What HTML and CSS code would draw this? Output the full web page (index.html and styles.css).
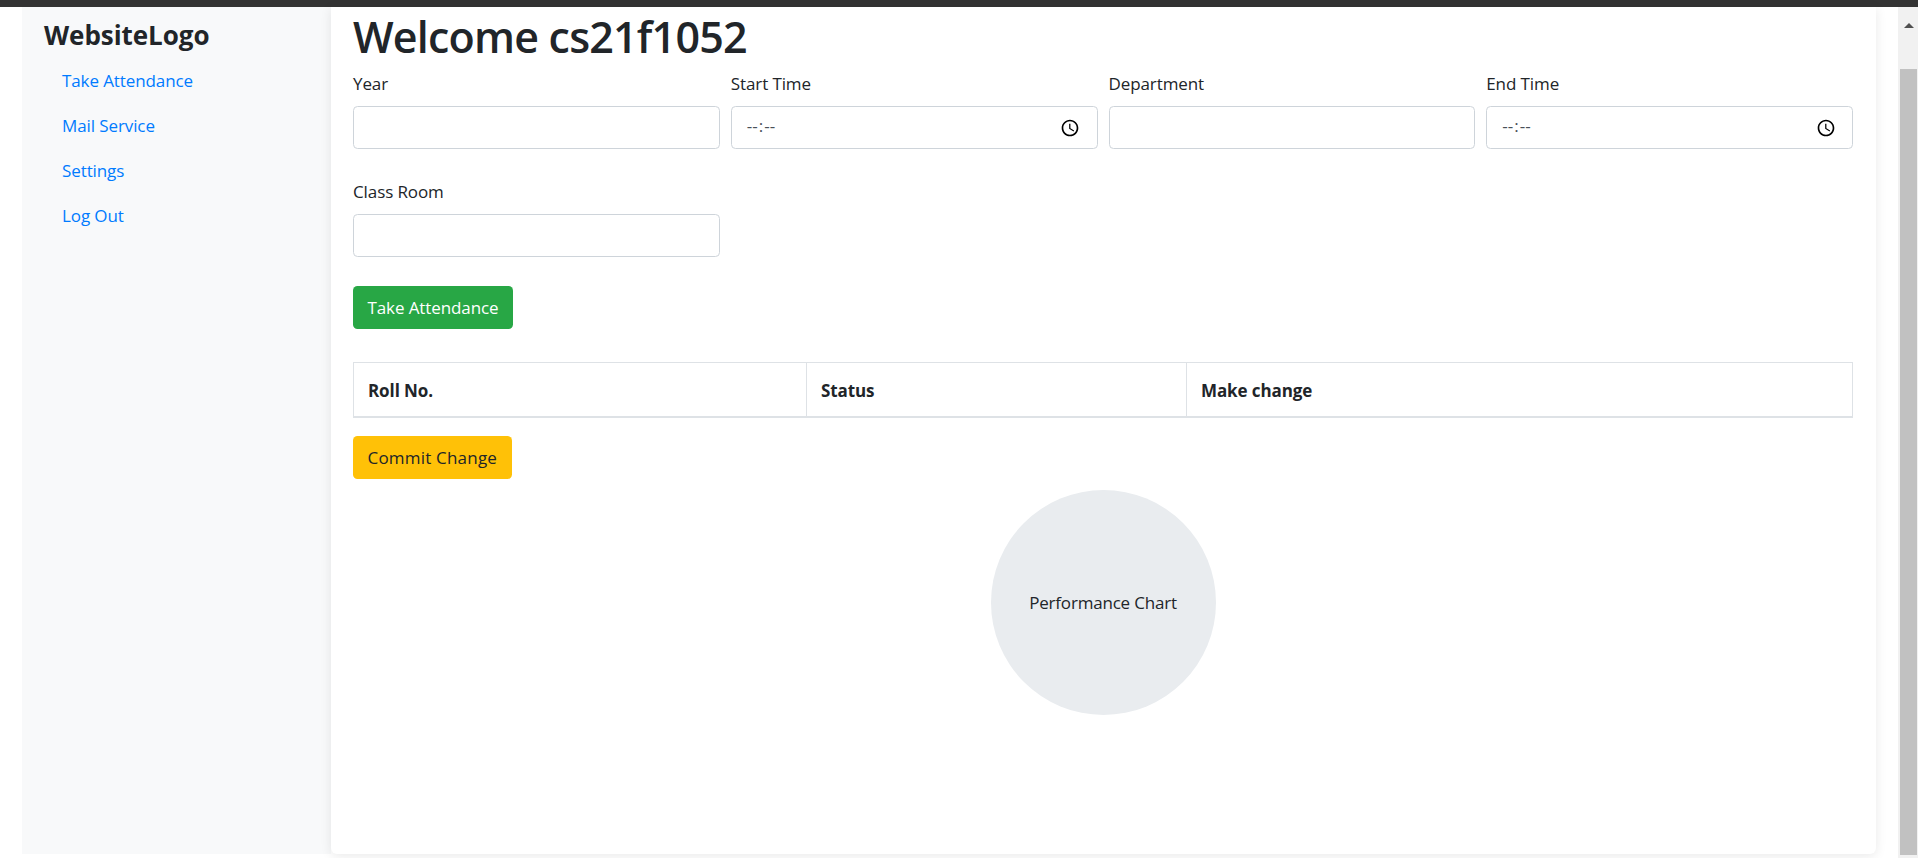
FILE: index.html
```html
<!DOCTYPE html>
<html lang="en">
<head>
<meta charset="utf-8">
<title>Welcome cs21f1052</title>
<link rel="stylesheet" href="styles.css">
</head>
<body>
<div class="topbar"></div>
<div class="window">
  <div class="page">
    <aside class="sidebar">
      <div class="logo">WebsiteLogo</div>
      <nav class="nav">
        <a href="#">Take Attendance</a>
        <a href="#">Mail Service</a>
        <a href="#">Settings</a>
        <a href="#">Log Out</a>
      </nav>
    </aside>
    <main class="card">
      <h1 class="title">Welcome cs21f1052</h1>
      <form class="form-grid">
        <div class="field"><label>Year</label><input class="control" type="text"></div>
        <div class="field"><label>Start Time</label><input class="control" type="time"></div>
        <div class="field"><label>Department</label><input class="control" type="text"></div>
        <div class="field"><label>End Time</label><input class="control" type="time"></div>
        <div class="field"><label>Class Room</label><input class="control" type="text"></div>
      </form>
      <button class="btn btn-green" type="button">Take Attendance</button>
      <table class="table">
        <thead>
          <tr><th class="col-roll">Roll No.</th><th class="col-status">Status</th><th>Make change</th></tr>
        </thead>
      </table>
      <button class="btn btn-yellow" type="button">Commit Change</button>
      <div class="chart-wrap"><div class="chart">Performance Chart</div></div>
    </main>
  </div>
  <div class="scrollbar">
    <div class="arrow"></div>
    <div class="thumb"></div>
  </div>
</div>
</body>
</html>
```

FILE: styles.css
```css
* { box-sizing: border-box; }
html, body { margin: 0; height: 858px; overflow: hidden; background: #fff; }
body { font-family: "Open Sans", "Noto Sans", sans-serif; font-size: 17px; line-height: 27px; color: #212529; }
.topbar { height: 7px; background: #333; }
.window { display: flex; height: 851px; }
.page { flex: 1; display: flex; padding: 0 22px 4px; min-width: 0; }
.sidebar { width: 309px; background: #f8f9fa; padding: 15px 22px 0; flex: none; }
.logo { font-size: 26px; line-height: 27px; font-weight: 700; letter-spacing: -0.05px; margin-bottom: 9px; }
.nav { display: flex; flex-direction: column; }
.nav a { color: #007bff; text-decoration: none; padding: 9px 18px; height: 45px; letter-spacing: -0.1px; }
.card { flex: 1; background: #fff; border-radius: 0 0 6px 6px; box-shadow: 0 2px 12px rgba(0,0,0,.09); padding: 3px 23px 0 22px; min-width: 0; position: relative; }
.title { margin: 0 0 6px; font-size: 43px; line-height: 54px; font-weight: 600; letter-spacing: -0.8px; }
.form-grid { display: grid; grid-template-columns: repeat(4, 1fr); column-gap: 11px; row-gap: 29px; }
.field { display: flex; flex-direction: column; }
.field label { margin-bottom: 9px; letter-spacing: -0.1px; }
.control { height: 43px; border: 1px solid #ced4da; border-radius: 4.5px; padding: 6px 14px; font: inherit; color: #495057; background: #fff; width: 100%; }
.control::-webkit-datetime-edit { letter-spacing: 3.2px; padding-bottom: 4px; }
.control::-webkit-datetime-edit-ampm-field { display: none; }
.control::-webkit-calendar-picker-indicator { width: 20px; height: 20px; margin-right: 2.5px; padding: 0; background-size: 20px 20px; }
.btn { display: block; height: 43px; border: 1px solid transparent; border-radius: 4.5px; padding: 0 13.5px; font: inherit; letter-spacing: -0.1px; }
.btn-green { margin-top: 29px; background: #28a745; color: #fff; }
.btn-yellow { margin-top: 18px; background: #ffc107; color: #212529; letter-spacing: 0.2px; }
.table { width: 100%; margin-top: 33px; border-collapse: collapse; table-layout: fixed; }
.table th { height: 54px; border: 1px solid #dee2e6; border-bottom-width: 2px; padding: 13px 14px 11px; text-align: left; font-weight: 700; letter-spacing: -0.1px; }
.col-roll { width: 453px; }
.col-status { width: 380px; }
.chart-wrap { display: flex; justify-content: center; margin-top: 11px; }
.chart { width: 225px; height: 225px; border-radius: 50%; background: #e9ecef; display: flex; align-items: center; justify-content: center; letter-spacing: -0.2px; }
.scrollbar { width: 20px; flex: none; background: #f1f1f1; padding: 0 1px 3px 2px; display: flex; flex-direction: column; }
.arrow { height: 62px; flex: none; padding-top: 8px; }
.arrow::before { content: ""; display: block; width: 0; height: 0; margin: 8px auto 0; border-left: 5px solid transparent; border-right: 5px solid transparent; border-bottom: 5px solid #505050; }
.thumb { flex: 1; background: #c1c1c1; }
```
